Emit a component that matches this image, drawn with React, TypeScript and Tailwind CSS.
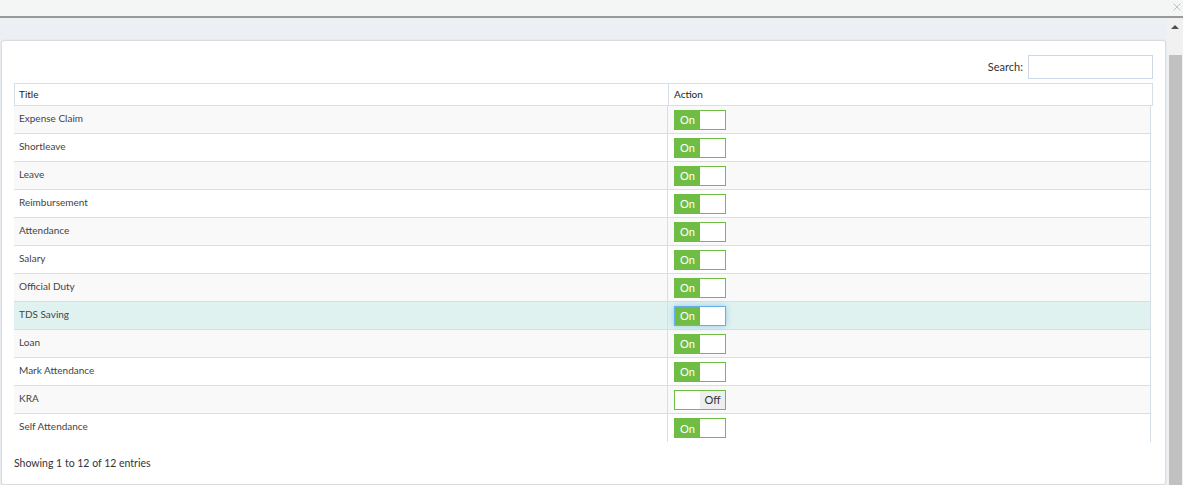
import React from 'react';

const rows: { title: string; on: boolean }[] = [
  { title: 'Expense Claim', on: true },
  { title: 'Shortleave', on: true },
  { title: 'Leave', on: true },
  { title: 'Reimbursement', on: true },
  { title: 'Attendance', on: true },
  { title: 'Salary', on: true },
  { title: 'Official Duty', on: true },
  { title: 'TDS Saving', on: true },
  { title: 'Loan', on: true },
  { title: 'Mark Attendance', on: true },
  { title: 'KRA', on: false },
  { title: 'Self Attendance', on: true },
];

const Toggle: React.FC<{ on: boolean; focused?: boolean }> = ({ on, focused }) => (
  <div
    className={`flex h-[20px] w-[52px] border text-[11px] leading-none ${
      focused ? 'border-[#66afe9] shadow-[0_0_6px_rgba(102,175,233,0.6)]' : 'border-[#70bd45]'
    }`}
  >
    {on ? (
      <>
        <div className="flex w-[25px] items-center justify-center bg-[#70bd45] text-white">On</div>
        <div className="flex-1 bg-white" />
      </>
    ) : (
      <>
        <div className="w-[25px] bg-white" />
        <div className="flex flex-1 items-center justify-center bg-[#eeeeee] text-[#333]">Off</div>
      </>
    )}
  </div>
);

export default function App() {
  return (
    <div className="relative h-[485px] w-[1183px] overflow-hidden bg-[#eceff4] font-['Lato',sans-serif] text-[#444]">
      {/* top strip */}
      <div className="flex h-[18px] items-start justify-end border-b-2 border-[#9a9a9a] bg-[#f4f5f5] pr-[1px] pt-[3px]">
        <svg width="8" height="8" viewBox="0 0 8 8" className="mr-[1px]">
          <path d="M0.5 0.5 L7.5 7.5 M7.5 0.5 L0.5 7.5" stroke="#c2c2c2" strokeWidth="1" />
        </svg>
      </div>

      <div className="flex">
        <div className="flex-1 pt-[22px] pl-[1px]">
          <div className="h-[445px] rounded-[3px] border border-[#dcdcdc] bg-white px-[12px] pt-[14px] shadow-[0_0_2px_rgba(0,0,0,0.08)]">
            <div className="flex items-center justify-end gap-[5px]">
              <span className="text-[11px] text-[#333]">Search:</span>
              <input className="h-[24px] w-[125px] border border-[#cdd9e6] bg-white outline-none" />
            </div>

            <div className="mt-[4px] w-[1139px]">
              <div className="flex h-[23px] border border-[#d6dee8] text-[10px] text-[#222]">
                <div className="flex w-[654px] items-center border-r border-[#d6dee8] pl-[4px]">Title</div>
                <div className="flex flex-1 items-center pl-[5px]">Action</div>
              </div>
              <div className="h-[336px] w-[1137px] overflow-hidden border-r border-[#d6dee8]">
                {rows.map((r, i) => {
                  const hl = r.title === 'TDS Saving';
                  const bg = hl ? 'bg-[#e0f2f0]' : i % 2 === 0 ? 'bg-[#f9f9f9]' : 'bg-white';
                  const last = i === rows.length - 1;
                  return (
                    <div
                      key={r.title}
                      className={`flex h-[28px] text-[10px] ${last ? '' : 'border-b border-[#dddddd]'} ${bg}`}
                    >
                      <div className="flex w-[654px] items-start border-r border-[#d6dee8] pl-[5px] pt-[5px]">
                        {r.title}
                      </div>
                      <div className="flex flex-1 items-center pl-[6px]">
                        <Toggle on={r.on} focused={hl} />
                      </div>
                    </div>
                  );
                })}
              </div>
            </div>

            <div className="mt-[14px] text-[10.5px] text-[#333]">Showing 1 to 12 of 12 entries</div>
          </div>
        </div>

        {/* page scrollbar */}
        <div className="ml-[1px] flex h-[467px] w-[16px] flex-col items-center bg-[#f1f1f1]">
          <div className="mt-[7px] h-0 w-0 border-x-[4px] border-b-[4px] border-x-transparent border-b-[#505050]" />
          <div className="mt-[26px] w-[13px] flex-1 bg-[#c1c1c1]" />
        </div>
      </div>
    </div>
  );
}
